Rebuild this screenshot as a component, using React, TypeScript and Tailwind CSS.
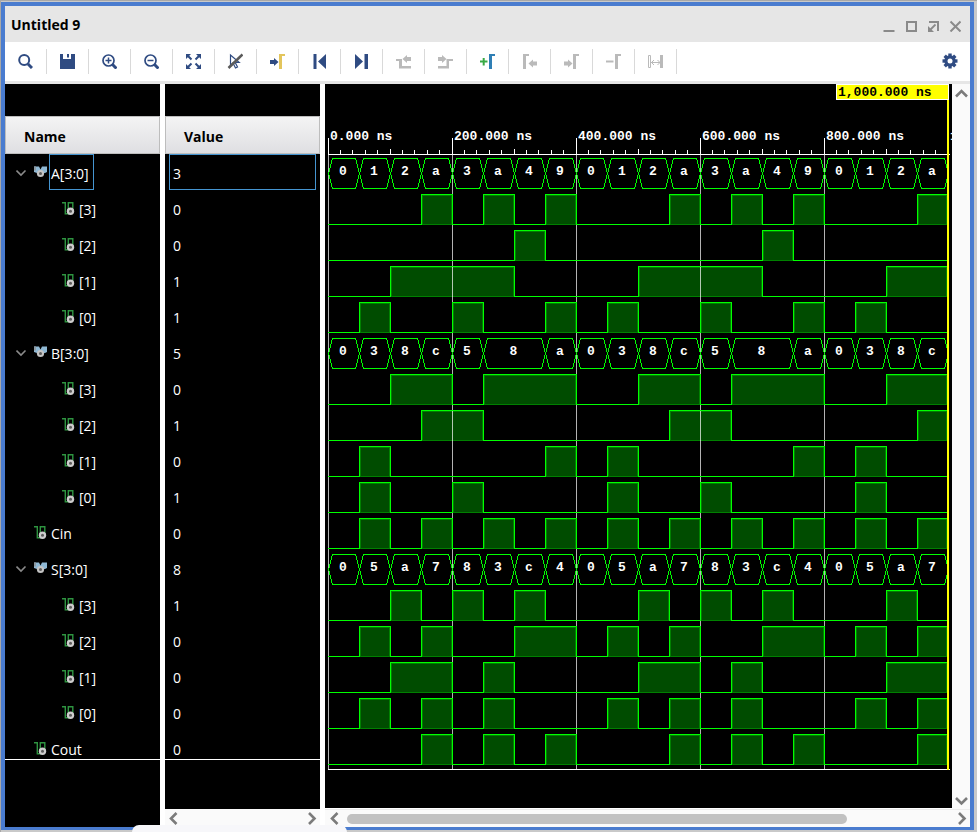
import type { ReactNode } from "react";

const NAVY = "#2f4b82";
const GREY = "#bababa";

/* ---------- signal data ---------- */

const A = [0, 1, 2, 10, 3, 10, 4, 9];
const B = [0, 3, 8, 12, 5, 8, 8, 10];
const S = [0, 5, 10, 7, 8, 3, 12, 4];
const CIN = [0, 1, 0, 1, 0, 1, 0, 1];
const COUT = [0, 0, 0, 1, 0, 1, 0, 1];

type Signal = {
  name: string;
  value: string;
  kind: "bus" | "bit" | "wire";
  data: number[];
};

const repeat = (d: number[]) => Array.from({ length: 20 }, (_, i) => d[i % 8]);

function bus(name: string, value: string, data: number[], bits: string[]): Signal[] {
  return [
    { name: `${name}[3:0]`, value, kind: "bus", data: repeat(data) },
    ...[3, 2, 1, 0].map((b, i): Signal => ({
      name: `[${b}]`,
      value: bits[i],
      kind: "bit",
      data: repeat(data.map((v) => (v >> b) & 1)),
    })),
  ];
}

const SIGNALS: Signal[] = [
  ...bus("A", "3", A, ["0", "0", "1", "1"]),
  ...bus("B", "5", B, ["0", "1", "0", "1"]),
  { name: "Cin", value: "0", kind: "wire", data: repeat(CIN) },
  ...bus("S", "8", S, ["1", "0", "0", "0"]),
  { name: "Cout", value: "0", kind: "wire", data: repeat(COUT) },
];

function runs(data: number[]) {
  const out: { v: number; from: number; to: number }[] = [];
  data.forEach((v, i) => {
    const last = out[out.length - 1];
    if (last && last.v === v) last.to = i + 1;
    else out.push({ v, from: i, to: i + 1 });
  });
  return out;
}

/* ---------- toolbar icons ---------- */

function Icon({ children }: { children: ReactNode }) {
  return (
    <svg className="block h-4 w-4" viewBox="0 0 16 16" fill="none" aria-hidden="true">
      {children}
    </svg>
  );
}

const arrowRight = (x: number, y: number, c: string) => (
  <path d={`M${x} ${y - 2}h4v-2l4.5 4l-4.5 4v-2h-4z`} fill={c} />
);
const arrowLeft = (x: number, y: number, c: string) => (
  <path d={`M${x} ${y - 2}h-4v-2l-4.500 4l4.500 4v-2h4z`} fill={c} />
);
const bracket = (x: number, c: string) => <path d={`M${x} 1h6v2h-3v13h-3z`} fill={c} />;

const TOOLS: { label: string; disabled?: boolean; icon: ReactNode }[] = [
  {
    label: "Find",
    icon: (
      <>
        <circle cx="7.200" cy="7" r="5" stroke={NAVY} strokeWidth="2" />
        <path d="M11 11l4 4" stroke={NAVY} strokeWidth="3" />
      </>
    ),
  },
  {
    label: "Save",
    icon: <path d="M1 1h3v5h8v-5h4v15h-15zM8 1h2v3.500h-2z" fill={NAVY} />,
  },
  {
    label: "Zoom In",
    icon: (
      <>
        <circle cx="7.500" cy="7.500" r="5.500" stroke={NAVY} strokeWidth="1.700" />
        <path d="M4.500 7.500h6M7.500 4.500v6" stroke={NAVY} strokeWidth="1.500" />
        <path d="M11.500 11.500l4 4" stroke={NAVY} strokeWidth="3" />
      </>
    ),
  },
  {
    label: "Zoom Out",
    icon: (
      <>
        <circle cx="7.500" cy="7.500" r="5.500" stroke={NAVY} strokeWidth="1.700" />
        <path d="M4.500 7.500h6" stroke={NAVY} strokeWidth="1.500" />
        <path d="M11.500 11.500l4 4" stroke={NAVY} strokeWidth="3" />
      </>
    ),
  },
  {
    label: "Zoom Fit",
    icon: (
      <>
        <path d="M1 1h5l-5 5zM16 1h-5l5 5zM1 16h5l-5-5zM16 16h-5l5-5z" fill={NAVY} />
        <path
          d="M3 3l3.500 3.500M14 3l-3.500 3.500M3 14l3.500-3.500M14 14l-3.500-3.500"
          stroke={NAVY}
          strokeWidth="2"
        />
      </>
    ),
  },
  {
    label: "Select",
    icon: (
      <>
        <path
          d="M3.500 2v10.500l2.500-2.500l2.500 5l2-1l-2.300-4.500h4z"
          stroke={NAVY}
          strokeWidth="1.200"
        />
        <path d="M1.500 15L15.500 1.500" stroke="#5a5a5a" strokeWidth="2.600" />
      </>
    ),
  },
  {
    label: "Go to Cursor",
    icon: (
      <>
        {arrowRight(1, 9, NAVY)}
        {bracket(10, "#e3c55c")}
      </>
    ),
  },
  {
    label: "Go to Start",
    icon: <path d="M2.500 1h3v15h-3zM15 1v15l-8-7.500z" fill={NAVY} />,
  },
  {
    label: "Go to End",
    icon: <path d="M2 1v15l8-7.500zM11.500 1h3.500v15h-3.500z" fill={NAVY} />,
  },
  {
    label: "Previous Transition",
    disabled: true,
    icon: (
      <>
        <path d="M1 6h6v7h9v2.500h-12v-7.500h-3z" fill={GREY} />
        {arrowLeft(16, 6, GREY)}
      </>
    ),
  },
  {
    label: "Next Transition",
    disabled: true,
    icon: (
      <>
        <path d="M16 6h-6.500v7h-8.500v2.500h11v-7.500h4z" fill={GREY} />
        {arrowRight(1, 6, GREY)}
      </>
    ),
  },
  {
    label: "Add Marker",
    icon: (
      <>
        <path d="M1 8.500h7.500M4.700 5v7.500" stroke="#3aaa45" strokeWidth="2" />
        {bracket(10, "#2f7fb5")}
      </>
    ),
  },
  {
    label: "Previous Marker",
    disabled: true,
    icon: (
      <>
        {bracket(2, GREY)}
        {arrowLeft(16, 10.5, GREY)}
      </>
    ),
  },
  {
    label: "Next Marker",
    disabled: true,
    icon: (
      <>
        {arrowRight(1, 10.5, GREY)}
        {bracket(10, GREY)}
      </>
    ),
  },
  {
    label: "Delete Marker",
    disabled: true,
    icon: (
      <>
        <path d="M1 7.500h7.500v2h-7.500z" fill={GREY} />
        {bracket(10, GREY)}
      </>
    ),
  },
  {
    label: "Swap Cursors",
    disabled: true,
    icon: (
      <>
        <path d="M1.500 2.500h2v12h-2z" stroke={GREY} />
        <path d="M13 2h3v13h-3z" fill={GREY} />
        <path d="M4 9.500h9M7 7l-2.500 2.500l2.500 2.500M10.500 7l2.500 2.500l-2.500 2.500" stroke={GREY} />
      </>
    ),
  },
];

function Gear() {
  return (
    <Icon>
      <g fill={NAVY}>
        {[0, 45, 90, 135].map((a) => (
          <rect key={a} x="6.300" y="0.500" width="3.400" height="15" transform={`rotate(${a} 8 8)`} />
        ))}
        <circle cx="8" cy="8" r="5.700" />
      </g>
      <circle cx="8" cy="8" r="2.500" fill="#fff" />
    </Icon>
  );
}

/* ---------- tree icons ---------- */

function BusIcon() {
  return (
    <svg className="block h-3 w-[13px] shrink-0" viewBox="0 0 13 12" aria-hidden="true">
      <path d="M0 0.500h5l1.500 3l1.500-3h5v5.500l-2 1h-8l-3-1z" fill="#8fb8d4" />
      <path d="M0 0.500h2v4h-2z" fill="#8d99a1" />
      <circle cx="6.500" cy="7.500" r="3.600" fill="#c4c4c4" />
      <circle cx="6.500" cy="7.500" r="1.500" fill="#5d5d5d" />
    </svg>
  );
}

function WireIcon() {
  return (
    <svg className="mb-1 block h-[13px] w-[13px] shrink-0" viewBox="0 0 13 13" fill="none" aria-hidden="true">
      <path d="M0 0.700h3.300v11h3v-11h4.500v6" stroke="#2e9440" strokeWidth="1.400" />
      <circle cx="8.500" cy="9.200" r="3.700" fill="#cdcdcd" />
      <circle cx="8.500" cy="9.200" r="1.500" fill="#5d5d5d" />
    </svg>
  );
}

function Chevron({ dir }: { dir: "up" | "down" | "left" | "right" }) {
  const d = {
    up: "M1 9.500L6.500 4L12 9.500",
    down: "M1 3L6.500 8.500L12 3",
    left: "M9.500 1L4 6.500L9.500 12",
    right: "M4 1L9.500 6.500L4 12",
  }[dir];
  return (
    <svg className="block h-[13px] w-[13px]" viewBox="0 0 13 13" fill="none" aria-hidden="true">
      <path d={d} stroke="#7b7b7b" strokeWidth="2.600" />
    </svg>
  );
}

/* ---------- panels ---------- */

const headClass =
  "h-[38px] border border-[#bdbdbd] bg-linear-to-b from-[#f4f4f4] to-[#dfdfe2] pt-1 pb-0 pl-[18px] text-left font-bold text-black";

function NamePanel() {
  return (
    <section className="w-[155px] shrink-0 bg-black pt-8">
      <div className="h-[644px] overflow-hidden border-b border-white">
        <table className="w-full table-fixed border-separate border-spacing-0">
          <thead>
            <tr>
              <th className={headClass}>Name</th>
            </tr>
          </thead>
          <tbody>
            {SIGNALS.map((s, i) => (
              <tr key={i}>
                <td className="h-9 p-0 text-white">
                  {s.kind === "bus" ? (
                    <div className="flex h-9 items-center pl-[11px]">
                      <button aria-label={`Collapse ${s.name}`} className="mr-[7px] block">
                        <svg className="block h-[11px] w-[11px]" viewBox="0 0 11 11" fill="none">
                          <path d="M0.500 3.500l4.500 4.500l4.500-4.500" stroke="#8a8a8a" strokeWidth="1.600" />
                        </svg>
                      </button>
                      <BusIcon />
                      <span
                        className={
                          i === 0
                            ? "ml-[2px] flex h-9 items-center border border-[#4595d1] pt-1 pr-1 pl-px"
                            : "ml-1 pt-1"
                        }
                      >
                        {s.name}
                      </span>
                    </div>
                  ) : (
                    <div
                      className={
                        s.kind === "bit"
                          ? "flex h-9 items-center gap-1 pt-1 pl-[57px]"
                          : "flex h-9 items-center gap-1 pt-1 pl-[29px]"
                      }
                    >
                      <WireIcon />
                      <span>{s.name}</span>
                    </div>
                  )}
                </td>
              </tr>
            ))}
          </tbody>
        </table>
      </div>
    </section>
  );
}

function ValuePanel() {
  return (
    <section className="flex w-[155px] shrink-0 flex-col bg-black pt-8">
      <div className="h-[644px] shrink-0 overflow-hidden border-b border-white">
        <table className="w-full table-fixed border-separate border-spacing-0">
          <thead>
            <tr>
              <th className={headClass}>Value</th>
            </tr>
          </thead>
          <tbody>
            {SIGNALS.map((s, i) => (
              <tr key={i}>
                <td className="h-9 px-1 py-0 text-white">
                  <div
                    className={
                      i === 0
                        ? "flex h-9 items-center border border-[#4595d1] pt-1 pl-[3px]"
                        : "flex h-9 items-center pt-1 pl-1"
                    }
                  >
                    {s.value}
                  </div>
                </td>
              </tr>
            ))}
          </tbody>
        </table>
      </div>
      <div className="mt-auto flex h-[18px] items-center justify-between bg-[#fafafa] px-[2px]">
        <button aria-label="Scroll values left">
          <Chevron dir="left" />
        </button>
        <button aria-label="Scroll values right">
          <Chevron dir="right" />
        </button>
      </div>
    </section>
  );
}

/* Wave canvas: one step is 50 ns, drawn 31 px wide; rows are 36 px high. */
const X0 = 3;
const STEP = 31;
const END = X0 + 20 * STEP - 1;
const TOP = 70;
const BRIGHT = "#00ff00";
const mono = "font-['Liberation_Mono',monospace] text-[13px] font-bold";

function Waves() {
  const px = (i: number) => X0 + i * STEP;
  const rowY = (r: number) => TOP + r * 36;
  return (
    <svg className="block h-[724px] w-[627px]" role="img" aria-label="Waveforms" shapeRendering="crispEdges">
      {/* filled high levels */}
      {SIGNALS.map((s, r) =>
        s.kind === "bus"
          ? null
          : runs(s.data)
              .filter((q) => q.v === 1)
              .map((q) => {
                const x = px(q.from);
                const w = Math.min(px(q.to), END) - x;
                return (
                  <rect
                    key={`${r}-${q.from}`}
                    x={x + 1.5}
                    y={rowY(r) + 5.5}
                    width={w - 2}
                    height={29}
                    fill="#004c00"
                    stroke="#008000"
                  />
                );
              }),
      )}

      {/* ruler and grid */}
      <path d={`M${X0} 70.500H${END + 3}`} stroke="#fff" />
      {Array.from({ length: 50 }, (_, i) => i).map((i) => {
        const x = X0 + Math.floor(i * 12.4) + 0.5;
        const top = i % 10 === 0 ? 54 : i % 5 === 0 ? 65 : 66;
        return <path key={i} d={`M${x} ${top}V70`} stroke="#fff" />;
      })}
      {[0, 4, 8, 12, 16].map((i) => (
        <path key={i} d={`M${px(i) + 0.5} 71V685`} stroke="#fff" strokeOpacity={0.7} />
      ))}
      <path d={`M${X0} 685.500H${END + 3}`} stroke="#fff" />
      {["0.000 ns", "200.000 ns", "400.000 ns", "600.000 ns", "800.000 ns", "1,000.000 ns"].map((t, i) => (
        <text key={t} x={px(i * 4) + 2} y={56} fill="#fff" className={mono}>
          {t}
        </text>
      ))}

      {/* signal traces */}
      {SIGNALS.map((s, r) => {
        const y = rowY(r);
        if (s.kind === "bus") {
          return (
            <g key={r}>
              {runs(s.data).map((q) => {
                const a = px(q.from) + 0.5;
                const b = Math.min(px(q.to), END + 1) + 0.5;
                const t = y + 4.5;
                const m = y + 19.5;
                const d = y + 34.5;
                return (
                  <g key={q.from}>
                    <path
                      d={`M${a} ${m}L${a + 4} ${t}H${b - 4}L${b} ${m}L${b - 4} ${d}H${a + 4}Z`}
                      fill="none"
                      stroke={BRIGHT}
                    />
                    <text x={(a + b) / 2 - 1} y={y + 21} fill="#fff" textAnchor="middle" className={mono}>
                      {q.v.toString(16)}
                    </text>
                  </g>
                );
              })}
            </g>
          );
        }
        const hi = y + 4.5;
        const lo = y + 34.5;
        const d = runs(s.data)
          .map((q) => {
            const a = px(q.from) + 0.5;
            const b = Math.min(px(q.to) + 0.5, END);
            const end = q.to < 20 ? `V${lo}` : "";
            return q.v ? `M${a} ${lo + 0.5}V${hi}H${b}${end}` : `M${a - 0.5} ${lo}H${b + 0.5}`;
          })
          .join("");
        return <path key={r} d={d} fill="none" stroke={BRIGHT} />;
      })}

      {/* time cursor */}
      <rect x={END} y={16} width={2} height={670} fill="#ffff00" />
      <rect x={END - 110.5} y={0.5} width={112} height={15} fill="#ffff00" stroke="#fff" />
      <text x={END - 109} y={12} fill="#000" className={mono}>
        1,000.000 ns
      </text>
    </svg>
  );
}

function WavePanel() {
  return (
    <section className="flex min-w-0 flex-1 flex-col bg-[#fafafa]">
      <div className="flex min-h-0 flex-1">
        <div className="min-w-0 flex-1 overflow-hidden border-b border-white bg-black">
          <Waves />
        </div>
        <div className="flex w-[18px] shrink-0 flex-col items-center justify-between pt-[3px] pb-px">
          <button aria-label="Scroll up">
            <Chevron dir="up" />
          </button>
          <button aria-label="Scroll down">
            <Chevron dir="down" />
          </button>
        </div>
      </div>
      <div className="flex h-[18px] shrink-0 items-center border-t border-[#ececec] pr-[2px] pl-[3px]">
        <button aria-label="Scroll waveform left">
          <Chevron dir="left" />
        </button>
        <div className="mx-[6px] h-[10px] flex-1">
          <div className="h-full w-[83%] rounded-full bg-[#c1c1c1]" />
        </div>
        <button aria-label="Scroll waveform right">
          <Chevron dir="right" />
        </button>
      </div>
    </section>
  );
}

const winIcon = "block h-3 w-3";

export default function App() {
  return (
    <div className="relative h-screen overflow-hidden border-t border-l border-[#a8a8a8] bg-[#c9c9c9] pt-px pr-[3px] pb-[2px] font-['Open_Sans','Noto_Sans',sans-serif] text-[14px] leading-5">
      <div className="flex h-full flex-col border-4 border-b-[3px] border-[#4a7ccf] bg-white">
        <header className="flex h-9 shrink-0 items-center justify-between bg-[#e6e6e6] pr-[9px] pl-[6px]">
          <h1 className="pt-0.5 font-bold text-black">Untitled 9</h1>
          <div className="mt-1 flex gap-[10px]">
            <button aria-label="Minimize">
              <svg className={winIcon} viewBox="0 0 12 12" aria-hidden="true">
                <path d="M0.500 10h11v2h-11z" fill="#8a8a8a" />
              </svg>
            </button>
            <button aria-label="Maximize">
              <svg className={winIcon} viewBox="0 0 12 12" fill="none" aria-hidden="true">
                <path d="M2 2h9v9h-9z" stroke="#8a8a8a" strokeWidth="2" />
              </svg>
            </button>
            <button aria-label="Float">
              <svg className={winIcon} viewBox="0 0 12 12" fill="none" aria-hidden="true">
                <path d="M2 2h9v9" stroke="#8a8a8a" strokeWidth="2" />
                <path d="M8.500 4.500l-5.500 5.500" stroke="#8a8a8a" strokeWidth="1.800" />
                <path d="M1 6v6h6z" fill="#8a8a8a" />
              </svg>
            </button>
            <button aria-label="Close">
              <svg className={winIcon} viewBox="0 0 12 12" fill="none" aria-hidden="true">
                <path d="M1.500 1.500l10 10M11.500 1.500L1.500 11.500" stroke="#8a8a8a" strokeWidth="2" />
              </svg>
            </button>
          </div>
        </header>

        <nav className="flex h-[42px] shrink-0 items-start border-b-[3px] border-[#e6e6e6] bg-white pt-[7px] pr-3">
          {TOOLS.map((t) => (
            <div key={t.label} className="h-[25px] w-[42px] shrink-0 border-r border-[#d9d9d9] pt-1 pl-3">
              <button aria-label={t.label} disabled={t.disabled} className="block">
                <Icon>{t.icon}</Icon>
              </button>
            </div>
          ))}
          <button aria-label="Settings" className="mt-1 ml-auto block">
            <Gear />
          </button>
        </nav>

        <main className="flex min-h-0 flex-1 gap-[5px]">
          <NamePanel />
          <ValuePanel />
          <WavePanel />
        </main>
      </div>
      <div className="absolute bottom-0 left-[131px] h-[7px] w-[215px] rounded-t-[10px] bg-[#f7f7fa]" />
    </div>
  );
}
